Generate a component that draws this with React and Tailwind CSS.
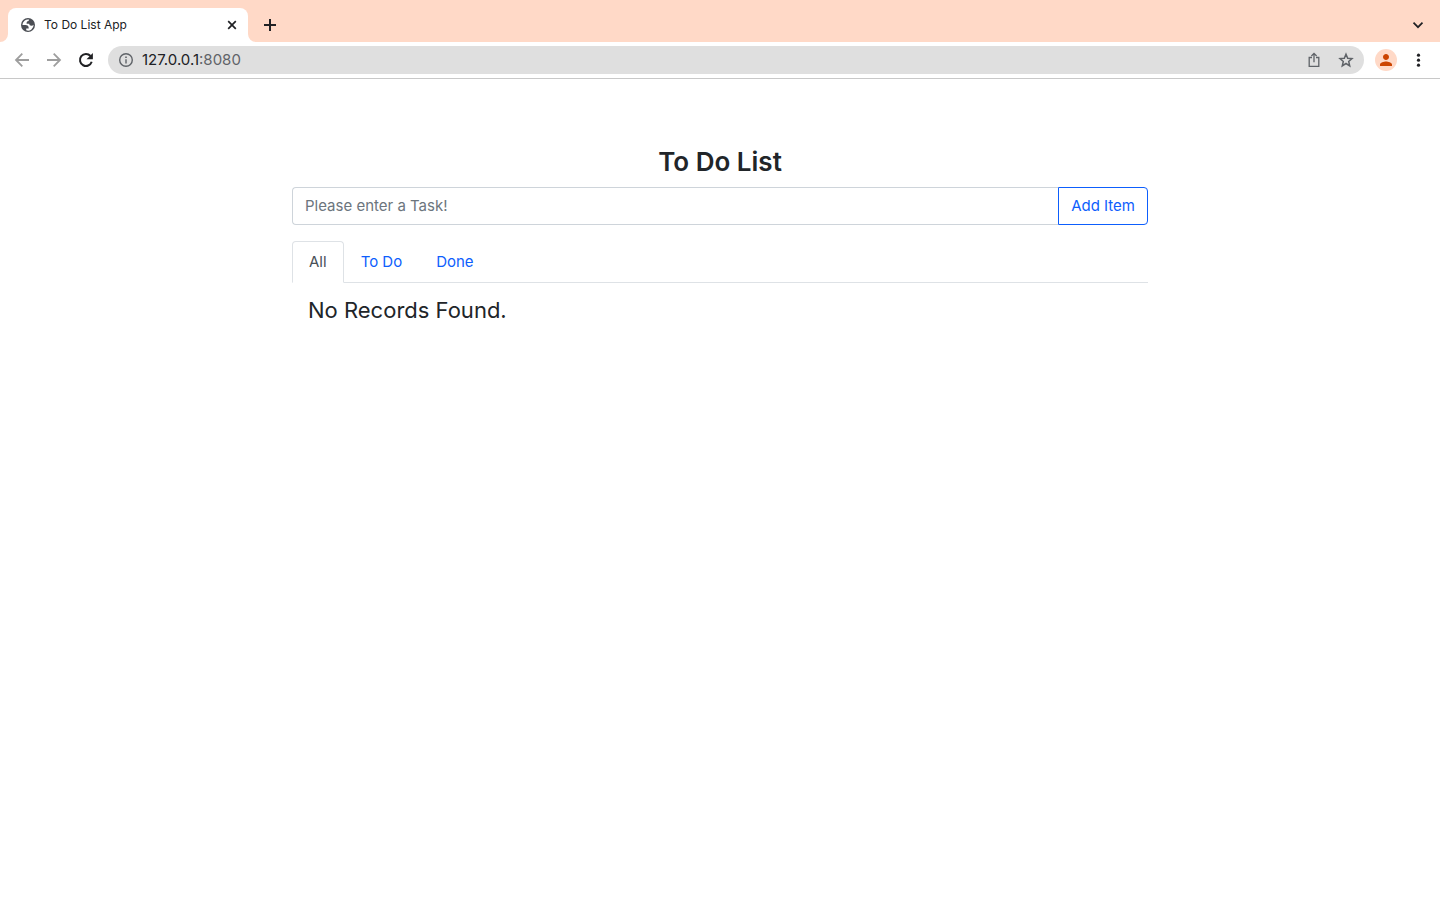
import { useState } from "react";
import { MdPerson } from "react-icons/md";

function Flare({ flip }) {
  return (
    <svg className="size-2 shrink-0" viewBox="0 0 8 8" aria-hidden="true">
      <path d={flip ? "M0 0A8 8 0 0 0 8 8H0Z" : "M8 0A8 8 0 0 1 0 8H8Z"} fill="#fff" />
    </svg>
  );
}

function LineIcon({ d, width = "1.8", children }) {
  return (
    <svg className="size-4" viewBox="0 0 16 16" fill="none" stroke="currentColor" strokeWidth={width} aria-hidden="true">
      <path d={d} />
      {children}
    </svg>
  );
}

function TabStrip() {
  return (
    <header className="flex h-[42px] items-end justify-between bg-[#ffd9c7] text-[#202124]">
      <div className="flex items-end">
        <Flare />
        <div className="flex h-[34px] w-60 items-center rounded-t-lg bg-white pr-2.5 pl-[13px]">
          <svg className="size-3.5 shrink-0" viewBox="2 2 20 20" aria-hidden="true">
            <circle cx="12" cy="12" r="10" fill="#4b4e54" />
            <path
              d="M4 12h4.400c3.407.022 4.922 1.730 4.543 5.127H9.488v2.470a8.004 8.004 0 0 0 10.498-8.083C19.327 12.504 18.332 13 17 13c-2.137 0-3.206-.916-3.206-2.750h-3.748c-.274-2.728.683-4.092 2.870-4.092 0-.975.327-1.597.811-1.970A8.004 8.004 0 0 0 4 12Z"
              fill="#fff"
            />
          </svg>
          <span className="ml-[9px] grow text-xs">To Do List App</span>
          <button type="button" aria-label="Close tab" className="flex size-3 items-center justify-center">
            <svg className="size-3" viewBox="0 0 12 12" fill="none" stroke="currentColor" strokeWidth="1.7">
              <path d="m2.200 2.200 7.600 7.600M9.800 2.200l-7.600 7.600" />
            </svg>
          </button>
        </div>
        <Flare flip />
        <button type="button" aria-label="New tab" className="flex h-[34px] w-7 items-center justify-center">
          <svg className="size-3" viewBox="0 0 12 12" fill="none" stroke="currentColor" strokeWidth="2">
            <path d="M6 0v12M0 6h12" />
          </svg>
        </button>
      </div>
      <button type="button" aria-label="Search tabs" className="mr-2 flex h-[34px] w-7 items-center justify-center">
        <svg className="size-3" viewBox="0 0 12 12" fill="none" stroke="currentColor" strokeWidth="1.7">
          <path d="m1.500 3.700 4.500 4.500 4.500-4.500" />
        </svg>
      </button>
    </header>
  );
}

function Toolbar() {
  return (
    <nav className="flex h-[37px] items-center border-b border-[#c8c8c8] pl-3.5 text-[#202124]">
      <div className="flex gap-4">
        <button type="button" aria-label="Back" className="text-[#9e9e9e]">
          <LineIcon d="M15 8H2.500M8.300 1.700 2 8l6.300 6.300" />
        </button>
        <button type="button" aria-label="Forward" className="text-[#9e9e9e]">
          <LineIcon d="M1 8h12.500M7.700 1.700 14 8l-6.300 6.300" />
        </button>
        <button type="button" aria-label="Reload">
          <LineIcon width="2" d="M13.700 9.800A6 6 0 1 1 12.500 4">
            <path d="M14.900.9v6.400H8.500Z" fill="currentColor" stroke="none" />
          </LineIcon>
        </button>
      </div>
      <div className="ml-3.5 flex h-7 grow items-center rounded-full bg-[#dfdfdf] px-2.5 text-[#5f6368]">
        <button type="button" aria-label="Site information">
          <LineIcon width="1.4" d="M8 7.200v4.300">
            <circle cx="8" cy="8" r="6.300" />
            <path d="M8 4.400v1.500" strokeWidth="1.600" />
          </LineIcon>
        </button>
        <a href="#" className="ml-2 grow text-[15px]">
          <span className="text-[#202124]">127.0.0.1</span>:8080
        </a>
        <button type="button" aria-label="Share this page" className="mr-4">
          <LineIcon width="1.3" d="M6 5.500H3.200v8.900h9.600V5.500H10M8 10.300V1.700M5.400 4 8 1.400 10.600 4" />
        </button>
        <button type="button" aria-label="Bookmark this page">
          <LineIcon width="1.5" d="m8 2.200 1.700 4 4.300.4-3.300 2.900 1 4.300L8 11.500l-3.700 2.300 1-4.300L2 6.600l4.300-.4Z" />
        </button>
      </div>
      <button type="button" aria-label="Profile" className="ml-[11px] flex size-[22px] items-center justify-center rounded-full bg-[#ffd9c7] text-lg text-[#cc4400]">
        <MdPerson />
      </button>
      <button type="button" aria-label="Menu" className="mr-3.5 ml-[13px]">
        <svg className="size-4" viewBox="0 0 16 16" fill="currentColor">
          <circle cx="8.500" cy="3.200" r="1.600" />
          <circle cx="8.500" cy="8.200" r="1.600" />
          <circle cx="8.500" cy="13.200" r="1.600" />
        </svg>
      </button>
    </nav>
  );
}

const tabs = ["All", "To Do", "Done"];

export default function App() {
  const [active, setActive] = useState("All");
  return (
    <div className="min-h-screen bg-white font-['Inter','Liberation_Sans',sans-serif]">
      <TabStrip />
      <Toolbar />
      <main className="mx-auto max-w-[856px] pt-[66px] text-[#212529]">
        <h1 className="mb-2 text-center text-[26px] leading-[34px] font-semibold">To Do List</h1>
        <form className="flex h-[38px]" onSubmit={(e) => e.preventDefault()}>
          <input
            aria-label="Task"
            placeholder="Please enter a Task!"
            className="min-w-0 grow rounded-l border border-r-0 border-[#ced4da] px-3 text-[15px] placeholder:text-[#6c757d]"
          />
          <button type="submit" className="rounded-r border border-[#0d5efd] px-3 text-[15px] text-[#0d5efd]">Add Item</button>
        </form>
        <div role="tablist" className="mt-4 flex border-b border-[#dee2e6] text-[15px] leading-6">
          {tabs.map((tab) => (
            <button
              key={tab}
              type="button"
              role="tab"
              aria-selected={active === tab}
              onClick={() => setActive(tab)}
              className={
                active === tab
                  ? "-mb-px rounded-t border border-[#dee2e6] border-b-white px-4 py-2 text-[#495057]"
                  : "-mb-px border border-transparent px-4 py-2 text-[#0d5efd]"
              }
            >
              {tab}
            </button>
          ))}
        </div>
        <section role="tabpanel" className="px-4 pt-3">
          <h2 className="text-[22px] leading-[30px]">No Records Found.</h2>
        </section>
      </main>
    </div>
  );
}
